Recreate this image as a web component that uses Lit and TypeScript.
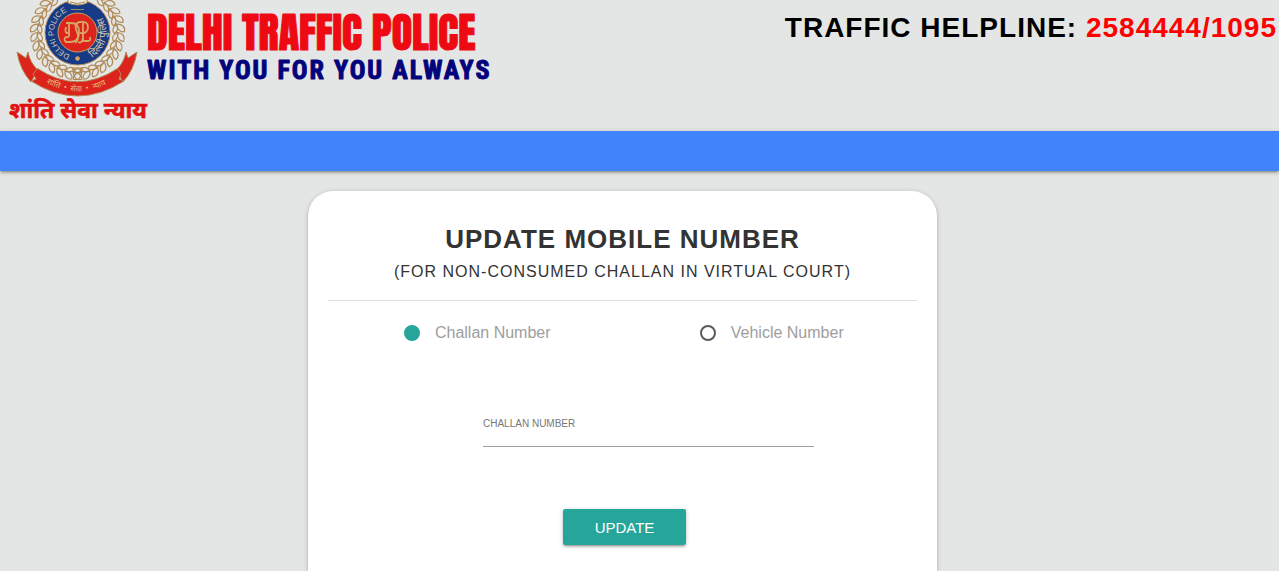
import { LitElement, html, css, svg } from "lit";
import { customElement, state } from "lit/decorators.js";

const ringLeaves = (cx: number, cy: number) => {
  const leaves = [];
  for (let deg = 6; deg <= 150; deg += 12) {
    for (const side of [-1, 1]) {
      leaves.push(svg`
        <g transform="translate(${cx} ${cy}) scale(${side} 1) rotate(${180 - deg}) translate(0 -40)">
          <path d="M0 0 C1 -6 5 -8 9 -6 C9 -2 4 1 0 0Z" />
          <path d="M0 0 C2 5 6 6 9 4 C7 0 3 -1 0 0Z" />
        </g>`);
    }
  }
  return leaves;
};

@customElement("police-logo")
export class PoliceLogo extends LitElement {
  static styles = css`
    :host { display: block; }
    .logo { display: block; width: 500px; height: 131px; }
    .leaves { fill: none; stroke: #b08a55; stroke-width: 1.2; }
    .ribbon { fill: #dc241c; stroke: #b08a55; stroke-width: 1; stroke-linejoin: round; }
    .tiny { font: 8px "Liberation Sans", sans-serif; fill: #d8c9a8; }
    .hindi { font-family: "Noto Sans Devanagari", "Noto Sans", "Lohit Devanagari", sans-serif; }
    .ring { font-size: 10px; fill: #d8c9a8; }
    .small { font-size: 8px; fill: #e6bd86; }
    .motto { font-size: 23px; font-weight: 700; fill: #e01010; stroke: #e01010; stroke-width: 0.6; }
    .name {
      font: 400 42px "Impact", "Anton", "Oswald", "Roboto Condensed", "Liberation Sans Narrow", "Liberation Sans", sans-serif;
      fill: #ee0a12;
      stroke: #ee0a12;
      stroke-width: 1;
      stroke-linejoin: round;
    }
    .line {
      font: 700 26px "Roboto Condensed", "Liberation Sans Narrow", "Liberation Sans", sans-serif;
      letter-spacing: 2px;
      fill: #03037c;
      stroke: #03037c;
      stroke-width: 1;
      stroke-linejoin: round;
    }
  `;

  render() {
    return html`
      <svg class="logo" viewBox="0 0 500 131" role="img" aria-label="Delhi Traffic Police">
        <defs>
          <path id="left-arc" d="M70 54.800 A23.500 23.500 0 0 1 70 10.200" />
          <path id="right-arc" d="M92 57.600 A29 29 0 0 0 92 7.400" />
          <path id="ribbon-arc" d="M42 80 Q77.500 103 114 80" />
        </defs>
        <g class="leaves">${ringLeaves(77.5, 32.5)}</g>
        <circle cx="77.5" cy="32.5" r="32.5" fill="#173a86" stroke="#b08a55" />
        <circle cx="77.5" cy="32.5" r="19.5" fill="#dc241c" stroke="#c9a06a" />
        <path d="M68 -2 H87 V3 Q77.5 7 68 3Z" fill="#f1ead9" stroke="#b08a55" />
        <path d="M70 2 Q77.5 5 85 2 M71 9.500 H84" fill="none" stroke="#9c8a68" />
        <g fill="none" stroke="#d9a765" stroke-width="1.800">
          <path d="M66 23 H71 Q79 23 79 32 Q79 42 70 42 H66 Q63 39 66 37 Q70 38 69 33 V24" />
          <path d="M66 27 Q64 34 69 33 M75 43 Q80 39 77 32 Q73 23 80 22 Q88 21 88 27 Q88 34 80 33" />
          <path d="M83 23 V41 H88 Q91 41 90 37 M78 42 Q82 44 83 38" />
        </g>
        <circle cx="77.5" cy="58.500" r="2.200" fill="#d9a765" />
        <text class="tiny"><textPath href="#left-arc">DELHI POLICE</textPath></text>
        <text class="ring hindi"><textPath href="#right-arc">दिल्ली पुलिस</textPath></text>
        <path class="ribbon" d="M17 52 L26 58 L28 52 Q30 63 38 70 L31 82 Q20 70 17 52Z" />
        <path class="ribbon" d="M137 52 L128 58 L126 52 Q124 63 116 70 L123 82 Q134 70 137 52Z" />
        <path class="ribbon" d="M37.500 68.500 Q77.500 95 117.500 68.500 L121 74 L119 79 L124 81 Q77.500 111 31 81 L36 79 L33 74Z" />
        <text class="small hindi"><textPath href="#ribbon-arc" startOffset="5">शांति&nbsp; • &nbsp;सेवा&nbsp; • &nbsp;न्याय</textPath></text>
        <text class="motto hindi" x="9" y="118">शांति सेवा न्याय</text>
        <text class="name" x="147" y="50">DELHI TRAFFIC POLICE</text>
        <text class="line" x="147" y="79">WITH YOU FOR YOU ALWAYS</text>
      </svg>
    `;
  }
}

type SearchMode = { id: string; label: string; caption: string };

@customElement("app-root")
export class AppRoot extends LitElement {
  static styles = css`
    :host {
      display: flex;
      flex-direction: column;
      min-height: 100vh;
      background: #e4e6e5;
      color: #333;
      font-family: "Liberation Sans", Arial, sans-serif;
    }
    .header { display: flex; justify-content: space-between; align-items: flex-start; }
    .helpline {
      margin: 0;
      padding: 12px 2px 0 0;
      font-size: 28px;
      line-height: 32px;
      font-weight: 700;
      letter-spacing: 1px;
      color: #000;
    }
    .phone { color: #f00; }
    .nav {
      height: 40px;
      background: #4183f9;
      box-shadow: 0 2px 2px 0 rgba(0, 0, 0, 0.14), 0 3px 1px -2px rgba(0, 0, 0, 0.12), 0 1px 5px 0 rgba(0, 0, 0, 0.2);
    }
    .main { flex: 1; display: grid; grid-template-columns: 308fr 629fr 342fr; padding-top: 20px; }
    .card {
      grid-column: 2;
      box-sizing: border-box;
      padding: 32px 20px 26px;
      background: #fff;
      border-radius: 25px 25px 0 0;
      box-shadow: 0 2px 2px 0 rgba(0, 0, 0, 0.14), 0 3px 1px -2px rgba(0, 0, 0, 0.12), 0 1px 5px 0 rgba(0, 0, 0, 0.2);
    }
    .heading { text-align: center; letter-spacing: 1px; padding-bottom: 16px; border-bottom: 1px solid #e0e0e0; }
    .title { margin: 0; font-size: 26px; line-height: 32px; font-weight: 700; }
    .subtitle { margin: 4px 0 0; font-size: 16px; line-height: 25px; }
    .modes { display: grid; grid-template-columns: 1fr 1fr; margin: 0; padding: 20px 0 0; border: 0; }
    .mode { display: flex; align-items: center; justify-content: center; height: 24px; font-size: 16px; color: #9e9e9e; cursor: pointer; }
    .radio {
      appearance: none;
      box-sizing: border-box;
      width: 16px;
      height: 16px;
      margin: 0 15px 0 4px;
      border: 2px solid #5a5a5a;
      border-radius: 50%;
    }
    .radio:checked { border-color: #26a69a; background: #26a69a; }
    .field { display: grid; grid-template-columns: 155fr 331fr 103fr; padding-top: 73px; }
    .caption { grid-column: 2; font-size: 10px; line-height: 12px; color: #777; }
    .input {
      grid-column: 2;
      box-sizing: border-box;
      width: 100%;
      height: 17px;
      padding: 0;
      border: 0;
      border-bottom: 1px solid #9e9e9e;
      outline: 0;
      background: transparent;
      font: 14px "Liberation Sans", Arial, sans-serif;
    }
    .actions { display: flex; justify-content: center; padding: 62px 0 0 4px; }
    .button {
      height: 36px;
      padding: 0 32px;
      border: 0;
      border-radius: 2px;
      background: #26a69a;
      color: #fff;
      font: 15px "Liberation Sans", Arial, sans-serif;
      box-shadow: 0 2px 2px 0 rgba(0, 0, 0, 0.14), 0 3px 1px -2px rgba(0, 0, 0, 0.12), 0 1px 5px 0 rgba(0, 0, 0, 0.2);
      cursor: pointer;
    }
  `;

  @state() private mode = "challan";

  private modes: SearchMode[] = [
    { id: "challan", label: "Challan Number", caption: "CHALLAN NUMBER" },
    { id: "vehicle", label: "Vehicle Number", caption: "VEHICLE NUMBER" },
  ];

  render() {
    const current = this.modes.find((m) => m.id === this.mode)!;
    return html`
      <header class="header">
        <police-logo></police-logo>
        <p class="helpline">TRAFFIC HELPLINE: <span class="phone">2584444/1095</span></p>
      </header>
      <nav class="nav"></nav>
      <main class="main">
        <form class="card" @submit=${(e: Event) => e.preventDefault()}>
          <div class="heading">
            <h1 class="title">UPDATE MOBILE NUMBER</h1>
            <p class="subtitle">(FOR NON-CONSUMED CHALLAN IN VIRTUAL COURT)</p>
          </div>
          <fieldset class="modes">
            ${this.modes.map(
              (m) => html`
                <label class="mode" for=${m.id}>
                  <input class="radio" type="radio" name="mode" id=${m.id}
                    .checked=${m.id === this.mode} @change=${() => (this.mode = m.id)} />
                  ${m.label}
                </label>
              `
            )}
          </fieldset>
          <div class="field">
            <label class="caption" for="number">${current.caption}</label>
            <input class="input" id="number" type="text" />
          </div>
          <div class="actions"><button class="button" type="submit">UPDATE</button></div>
        </form>
      </main>
    `;
  }
}
